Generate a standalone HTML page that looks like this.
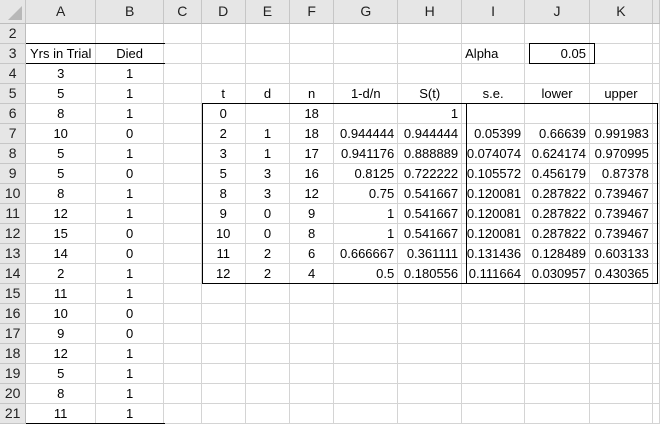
<!DOCTYPE html>
<html><head><meta charset="utf-8"><style>
body{margin:0;width:660px;height:426px;overflow:hidden;background:#fff;font-family:"Liberation Sans",Arial,sans-serif;font-size:13px;color:#000;position:relative}
table{border-collapse:collapse;table-layout:fixed;position:absolute;left:0;top:0}
td{height:19px;padding:0 3px;border-right:1px solid #d4d4d4;border-bottom:1px solid #d4d4d4;white-space:nowrap;overflow:hidden;text-align:right;line-height:19px}
tr.h td{background:#e6e6e6;height:23px;text-align:center;color:#222;border-right:1px solid #c6c6c6;border-bottom:1px solid #bdbdbd;font-size:14px}
td.rh{background:#e6e6e6;text-align:center;color:#222;border-right:1px solid #bdbdbd;border-bottom:1px solid #c6c6c6;padding:0;font-size:14px}
.c{text-align:center}.l{text-align:left}
.b{position:absolute;background:#000}
</style></head><body>
<table>
<colgroup><col style="width:26px"><col style="width:70px"><col style="width:69px"><col style="width:38px"><col style="width:45px"><col style="width:45px"><col style="width:45px"><col style="width:64px"><col style="width:64px"><col style="width:63px"><col style="width:65px"><col style="width:63px"><col style="width:3px"></colgroup>
<tr class="h"><td style="position:relative"><svg width="14" height="14" style="position:absolute;right:3px;bottom:3px"><polygon points="14,0 14,14 0,14" fill="#b8b8b8"/></svg></td><td>A</td><td>B</td><td>C</td><td>D</td><td>E</td><td>F</td><td>G</td><td>H</td><td>I</td><td>J</td><td>K</td><td></td></tr>
<tr><td class="rh">2</td><td></td><td></td><td></td><td></td><td></td><td></td><td></td><td></td><td></td><td></td><td></td><td></td></tr>
<tr><td class="rh">3</td><td class="c">Yrs in Trial</td><td class="c">Died</td><td></td><td></td><td></td><td></td><td></td><td></td><td class="l">Alpha</td><td>0.05</td><td></td><td></td></tr>
<tr><td class="rh">4</td><td class="c">3</td><td class="c">1</td><td></td><td></td><td></td><td></td><td></td><td></td><td></td><td></td><td></td><td></td></tr>
<tr><td class="rh">5</td><td class="c">5</td><td class="c">1</td><td></td><td class="c">t</td><td class="c">d</td><td class="c">n</td><td class="c">1-d/n</td><td class="c">S(t)</td><td class="c">s.e.</td><td class="c">lower</td><td class="c">upper</td><td></td></tr>
<tr><td class="rh">6</td><td class="c">8</td><td class="c">1</td><td></td><td class="c">0</td><td class="c"></td><td class="c">18</td><td></td><td>1</td><td></td><td></td><td></td><td></td></tr>
<tr><td class="rh">7</td><td class="c">10</td><td class="c">0</td><td></td><td class="c">2</td><td class="c">1</td><td class="c">18</td><td>0.944444</td><td>0.944444</td><td>0.05399</td><td>0.66639</td><td>0.991983</td><td></td></tr>
<tr><td class="rh">8</td><td class="c">5</td><td class="c">1</td><td></td><td class="c">3</td><td class="c">1</td><td class="c">17</td><td>0.941176</td><td>0.888889</td><td>0.074074</td><td>0.624174</td><td>0.970995</td><td></td></tr>
<tr><td class="rh">9</td><td class="c">5</td><td class="c">0</td><td></td><td class="c">5</td><td class="c">3</td><td class="c">16</td><td>0.8125</td><td>0.722222</td><td>0.105572</td><td>0.456179</td><td>0.87378</td><td></td></tr>
<tr><td class="rh">10</td><td class="c">8</td><td class="c">1</td><td></td><td class="c">8</td><td class="c">3</td><td class="c">12</td><td>0.75</td><td>0.541667</td><td>0.120081</td><td>0.287822</td><td>0.739467</td><td></td></tr>
<tr><td class="rh">11</td><td class="c">12</td><td class="c">1</td><td></td><td class="c">9</td><td class="c">0</td><td class="c">9</td><td>1</td><td>0.541667</td><td>0.120081</td><td>0.287822</td><td>0.739467</td><td></td></tr>
<tr><td class="rh">12</td><td class="c">15</td><td class="c">0</td><td></td><td class="c">10</td><td class="c">0</td><td class="c">8</td><td>1</td><td>0.541667</td><td>0.120081</td><td>0.287822</td><td>0.739467</td><td></td></tr>
<tr><td class="rh">13</td><td class="c">14</td><td class="c">0</td><td></td><td class="c">11</td><td class="c">2</td><td class="c">6</td><td>0.666667</td><td>0.361111</td><td>0.131436</td><td>0.128489</td><td>0.603133</td><td></td></tr>
<tr><td class="rh">14</td><td class="c">2</td><td class="c">1</td><td></td><td class="c">12</td><td class="c">2</td><td class="c">4</td><td>0.5</td><td>0.180556</td><td>0.111664</td><td>0.030957</td><td>0.430365</td><td></td></tr>
<tr><td class="rh">15</td><td class="c">11</td><td class="c">1</td><td></td><td></td><td></td><td></td><td></td><td></td><td></td><td></td><td></td><td></td></tr>
<tr><td class="rh">16</td><td class="c">10</td><td class="c">0</td><td></td><td></td><td></td><td></td><td></td><td></td><td></td><td></td><td></td><td></td></tr>
<tr><td class="rh">17</td><td class="c">9</td><td class="c">0</td><td></td><td></td><td></td><td></td><td></td><td></td><td></td><td></td><td></td><td></td></tr>
<tr><td class="rh">18</td><td class="c">12</td><td class="c">1</td><td></td><td></td><td></td><td></td><td></td><td></td><td></td><td></td><td></td><td></td></tr>
<tr><td class="rh">19</td><td class="c">5</td><td class="c">1</td><td></td><td></td><td></td><td></td><td></td><td></td><td></td><td></td><td></td><td></td></tr>
<tr><td class="rh">20</td><td class="c">8</td><td class="c">1</td><td></td><td></td><td></td><td></td><td></td><td></td><td></td><td></td><td></td><td></td></tr>
<tr><td class="rh">21</td><td class="c">11</td><td class="c">1</td><td></td><td></td><td></td><td></td><td></td><td></td><td></td><td></td><td></td><td></td></tr>
</table>
<div class="b" style="left:26px;top:43px;width:139px;height:1px"></div>
<div class="b" style="left:26px;top:63px;width:139px;height:1px"></div>
<div class="b" style="left:26px;top:423px;width:139px;height:1px"></div>
<div class="b" style="left:529px;top:43px;width:65px;height:1px"></div>
<div class="b" style="left:529px;top:63px;width:66px;height:1px"></div>
<div class="b" style="left:529px;top:43px;width:1px;height:21px"></div>
<div class="b" style="left:594px;top:43px;width:1px;height:21px"></div>
<div class="b" style="left:202px;top:103px;width:456px;height:1px"></div>
<div class="b" style="left:202px;top:283px;width:456px;height:1px"></div>
<div class="b" style="left:202px;top:103px;width:1px;height:181px"></div>
<div class="b" style="left:657px;top:103px;width:1px;height:181px"></div>
<div class="b" style="left:466px;top:103px;width:1px;height:181px"></div>
</body></html>
